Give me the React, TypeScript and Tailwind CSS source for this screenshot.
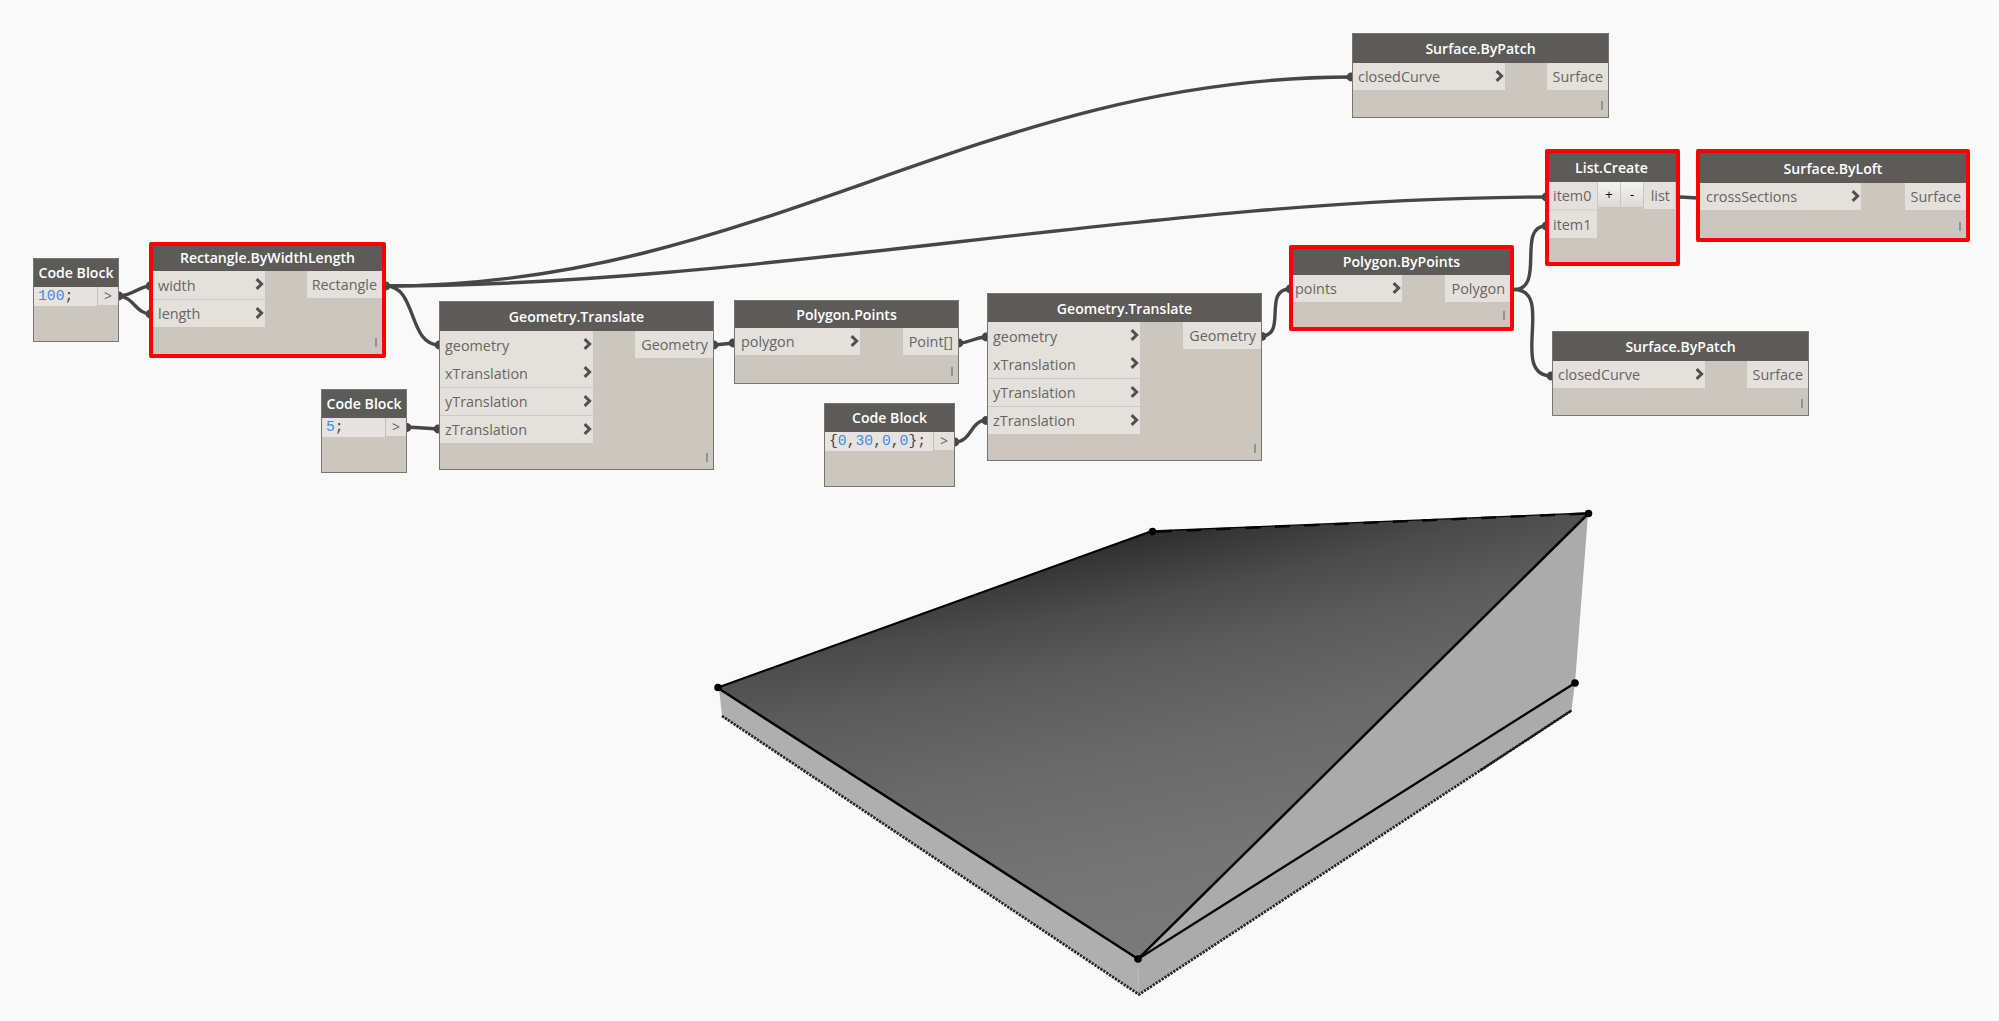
import React from "react";

type Port = { label: string; line?: boolean };

type NodeProps = {
  title: string;
  place: string;
  header: string;
  inputs: Port[];
  inputWidth: string;
  inputPad?: string;
  output: string;
  outputWidth: string;
  selected?: boolean;
};

function Chevron() {
  return (
    <svg width="9" height="12" viewBox="0 0 9 12" className="mr-[1.5px] -mt-[4px] shrink-0">
      <path d="M1.6 1.2 L6.6 6 L1.6 10.8" fill="none" stroke="#505050" strokeWidth="3" />
    </svg>
  );
}

function Header({ title, className }: { title: string; className: string }) {
  return (
    <div
      className={`flex shrink-0 items-center justify-center bg-[#5d5b58] text-[14.1px] font-semibold leading-none whitespace-nowrap text-white ${className}`}
    >
      {title}
    </div>
  );
}

function GraphNode(p: NodeProps) {
  return (
    <div
      className={`absolute flex flex-col bg-[#cbc6be] ${
        p.selected ? "rounded-[2px] border-4 border-[#ff0000]" : "border border-[#777571]"
      } ${p.place}`}
    >
      <Header title={p.title} className={p.header} />
      <div className="flex items-start justify-between">
        <div className={`flex flex-col ${p.inputWidth}`}>
          {p.inputs.map((port) => (
            <div
              key={port.label}
              className={`flex items-center justify-between bg-[#e4e1dc] pt-[2px] text-[14.4px] leading-none text-[#666563] ${
                p.inputs.length > 1 ? "h-[28px]" : "h-[27px]"
              } ${port.line ? "border-t border-[#cbc9c5]" : ""} ${p.inputPad ?? "pl-[5px]"}`}
            >
              <span>{port.label}</span>
              <Chevron />
            </div>
          ))}
        </div>
        <div
          className={`flex h-[27px] items-center justify-end bg-[#e4e1dc] pt-[2px] pr-[5px] text-[14.4px] leading-none text-[#666563] ${p.outputWidth}`}
        >
          {p.output}
        </div>
      </div>
      <div className="mt-auto mb-[7px] mr-[5px] h-[9px] w-[2px] self-end bg-[#96928d]" />
    </div>
  );
}

function CodeBlock({ place, header, children }: { place: string; header: string; children: React.ReactNode }) {
  return (
    <div className={`absolute flex flex-col border border-[#777571] bg-[#cbc6be] ${place}`}>
      <Header title="Code Block" className={header} />
      <div className="flex items-start">
        <div className="flex h-[19px] flex-1 items-center border-r border-[#c0bdb8] bg-[#e6e3e0] pl-[4px] font-['Liberation_Mono',monospace] text-[14.7px] leading-none whitespace-pre text-[#444]">
          {children}
        </div>
        <div className="flex h-[18px] w-[20px] items-center justify-center bg-[#e4e1dc] text-[14px] leading-none text-[#666563]">
          &gt;
        </div>
      </div>
    </div>
  );
}

function Num({ children }: { children: React.ReactNode }) {
  return <span className="text-[#3a8ee6]">{children}</span>;
}

function Step({ children }: { children: React.ReactNode }) {
  return (
    <div className="flex h-[25px] w-[22px] items-center justify-center bg-linear-to-b from-[#f3f3f3] to-[#dddad6] text-[13px] leading-none text-black">
      {children}
    </div>
  );
}

const wires = [
  "M118 296 C134 296 138 286 151 286",
  "M118 296 C134 296 135 314 151 314",
  "M386 286 C760 286 980 77 1352 77",
  "M386 286 C760 286 1160 197 1546 197",
  "M386 286 C417 286 408 345 439 345",
  "M407 427 L439 429",
  "M714 345 L734 343",
  "M958 343 C972 343 973 337 987 337",
  "M955 442 C972 442 970 420 987 420",
  "M1261 336 C1288 336 1262 289 1290 289",
  "M1514 289.500 C1546 289.500 1516 226 1546 226",
  "M1514 289.500 C1556 289.500 1508 376 1552 376",
  "M1680 197 L1697 198",
];

const ports = [
  [119, 296], [150, 286], [150, 314], [386, 286], [439, 345], [407, 427.5], [438, 429],
  [714, 345], [733, 343], [959, 343], [986, 337], [955, 442], [986, 420.5], [1262, 336.5],
  [1290, 289], [1351, 77], [1546, 197], [1546, 226], [1551, 376],
];

function Wires() {
  return (
    <svg className="absolute inset-0" width="1999" height="1021" viewBox="0 0 1999 1021">
      {wires.map((d) => (
        <path key={d} d={d} fill="none" stroke="#474645" strokeWidth="3.4" />
      ))}
      {ports.map(([x, y]) => (
        <circle key={`${x}-${y}`} cx={x} cy={y} r="4.4" fill="#474645" />
      ))}
    </svg>
  );
}

function Model() {
  return (
    <svg className="absolute inset-0" width="1999" height="1021" viewBox="0 0 1999 1021">
      <defs>
        <radialGradient
          id="top"
          gradientUnits="userSpaceOnUse"
          cx="0"
          cy="0"
          r="1"
          gradientTransform="translate(1152 528) rotate(-11.3) scale(3800 430)"
        >
          <stop offset="0" stopColor="#2b2b2b" />
          <stop offset="0.065" stopColor="#393939" />
          <stop offset="0.16" stopColor="#4b4b4b" />
          <stop offset="0.3" stopColor="#5c5c5c" />
          <stop offset="0.5" stopColor="#696969" />
          <stop offset="0.75" stopColor="#747474" />
          <stop offset="1" stopColor="#7b7b7b" />
        </radialGradient>
      </defs>
      <polygon points="719,688 1138,959 1139,994 722,716" fill="#afafaf" />
      <polygon points="1588,514 1575,683 1571.500,710 1139,994 1138,959" fill="#ababab" />
      <polygon points="718,687.500 1152,531 1588.500,513 1138,959" fill="url(#top)" />
      <g fill="none" stroke="#050505" strokeWidth="2.1">
        <path d="M718 687.500 L1152 531" />
        <path d="M1152 531 L1588.500 513" strokeWidth="1.3" />
        <path d="M1157 531.700 L1588.500 513.500" strokeWidth="2.4" strokeDasharray="15 14.500" />
        <path d="M718 688 L1138 959 L1588.500 513.500" strokeWidth="2.5" />
        <path d="M1138 959 L1575 683" strokeWidth="2.3" />
        <path d="M1571.500 710.500 L1480 770.600" strokeWidth="2" />
      </g>
      <path
        d="M722 716 L1139 994.500 L1571.500 710.500"
        fill="none"
        stroke="#20262a"
        strokeWidth="2.700"
        strokeDasharray="2.400 1.100"
      />
      {[[718, 687.5], [1152.5, 531.5], [1588.5, 513.5], [1138, 959], [1575, 683]].map(([x, y]) => (
        <circle key={x} cx={x} cy={y} r="3.8" fill="#000" />
      ))}
    </svg>
  );
}

const translateInputs: Port[] = [
  { label: "geometry" },
  { label: "xTranslation" },
  { label: "yTranslation", line: true },
  { label: "zTranslation", line: true },
];

export default function App() {
  return (
    <div className="relative h-[1021px] w-[1999px] overflow-hidden bg-[#f9f9f9] font-['Open_Sans',sans-serif]">
      <Wires />
      <Model />

      <CodeBlock place="left-[33px] top-[258px] h-[84px] w-[86px]" header="h-[28px] pt-px">
        <Num>100</Num>;
      </CodeBlock>
      <CodeBlock place="left-[321px] top-[389px] h-[84px] w-[86px]" header="h-[28px]">
        <Num>5</Num>;
      </CodeBlock>
      <CodeBlock place="left-[824px] top-[403px] h-[84px] w-[131px]" header="h-[28px]">
        {"{"}<Num>0</Num>,<Num>30</Num>,<Num>0</Num>,<Num>0</Num>{"};"}
      </CodeBlock>

      <GraphNode
        title="Rectangle.ByWidthLength" place="left-[149px] top-[242px] h-[116px] w-[237px]" header="h-[25px]" selected
        inputs={[{ label: "width" }, { label: "length", line: true }]} inputWidth="w-[112px]"
        output="Rectangle" outputWidth="w-[75px]"
      />
      <GraphNode
        title="Geometry.Translate" place="left-[439px] top-[301px] h-[169px] w-[275px]" header="h-[29px] pt-[2px]"
        inputs={translateInputs} inputWidth="w-[153px]" output="Geometry" outputWidth="w-[78px]"
      />
      <GraphNode
        title="Polygon.Points" place="left-[734px] top-[300px] h-[84px] w-[225px]" header="h-[27px] pt-[2px]"
        inputs={[{ label: "polygon" }]} inputWidth="w-[125px]" inputPad="pl-[6px]"
        output="Point[]" outputWidth="w-[55px]"
      />
      <GraphNode
        title="Geometry.Translate" place="left-[987px] top-[293px] h-[168px] w-[275px]" header="h-[28px] pt-[2px]"
        inputs={translateInputs} inputWidth="w-[152px]" output="Geometry" outputWidth="w-[78px]"
      />
      <GraphNode
        title="Polygon.ByPoints" place="left-[1289px] top-[245px] h-[86px] w-[225px]" header="h-[26px]" selected
        inputs={[{ label: "points" }]} inputWidth="w-[109px]" inputPad="pl-[2px]"
        output="Polygon" outputWidth="w-[65px]"
      />
      <GraphNode
        title="Surface.ByPatch" place="left-[1352px] top-[33px] h-[85px] w-[257px]" header="h-[29px] pt-[2px]"
        inputs={[{ label: "closedCurve" }]} inputWidth="w-[152px]"
        output="Surface" outputWidth="w-[61px]"
      />
      <GraphNode
        title="Surface.ByPatch" place="left-[1552px] top-[331px] h-[85px] w-[257px]" header="h-[29px] pt-[2px]"
        inputs={[{ label: "closedCurve" }]} inputWidth="w-[152px]"
        output="Surface" outputWidth="w-[61px]"
      />
      <GraphNode
        title="Surface.ByLoft" place="left-[1696px] top-[149px] h-[93px] w-[274px]" header="h-[30px] pt-[2px]" selected
        inputs={[{ label: "crossSections" }]} inputWidth="w-[161px]" inputPad="pl-[6px]"
        output="Surface" outputWidth="w-[61px]"
      />

      <div className="absolute left-[1545px] top-[149px] flex h-[117px] w-[135px] flex-col rounded-[2px] border-4 border-[#ff0000] bg-[#cbc6be]">
        <Header title="List.Create" className="h-[29px] pt-[2px] pr-[2px]" />
        <div className="flex items-start gap-px text-[14.4px] leading-none text-[#666563]">
          <div className="flex w-[48px] flex-col">
            <div className="flex h-[27px] items-center bg-[#e4e1dc] pt-[2px] pl-[4px]">item0</div>
            <div className="flex h-[29px] items-center border-t-2 border-[#d9d6d1] bg-[#e4e1dc] pt-px pl-[4px]">item1</div>
          </div>
          <Step>+</Step>
          <Step>-</Step>
          <div className="flex h-[27px] w-[31px] items-center justify-end bg-[#e4e1dc] pt-[2px] pr-[5px]">list</div>
        </div>
      </div>
    </div>
  );
}
